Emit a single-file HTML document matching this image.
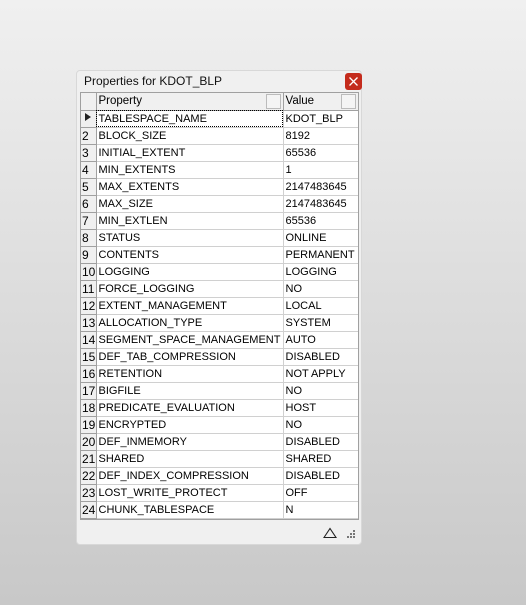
<!DOCTYPE html>
<html><head><style>
body{margin:0;width:526px;height:605px;background:linear-gradient(#f0f0f0,#c8c8c8);font-family:"Liberation Sans",sans-serif;font-size:11px;position:relative;overflow:hidden}
.win{position:absolute;left:76px;top:70px;width:286px;height:475px;background:#f0f0f0;border:1px solid #d8d8d8;border-radius:4px;box-sizing:border-box}
.title{position:absolute;left:7px;top:3px;font-size:12px;color:#111}
.close{position:absolute;left:268px;top:2px;width:17px;height:17px;background:#c42b1c;border-radius:3px}
.grid{position:absolute;left:3px;top:21px;width:279px;height:428px;background:#fff;border:1px solid #a0a0a0;box-sizing:border-box;overflow:hidden}
table{border-collapse:collapse;table-layout:fixed;width:277px}
td{height:17px;padding:0 0 0 2px;border-right:1px solid #d0d0d0;border-bottom:1px solid #d0d0d0;white-space:nowrap;overflow:hidden;line-height:16px;color:#000;box-sizing:border-box}
td.n{background:#f0f0f0;border-right:1px solid #a0a0a0;border-bottom:1px solid #a0a0a0;padding-left:1px;font-size:12px}
tr.h td{background:#f0f0f0;border-bottom:1px solid #a0a0a0;border-right:1px solid #a0a0a0;position:relative;font-size:11.5px}
.bx{position:absolute;right:2px;top:1px;width:13px;height:13px;border:1px solid #bbb;background:#f4f4f4}
</style></head><body>
<div class="win">
<div class="title">Properties for KDOT_BLP</div>
<div class="close"><svg width="17" height="17"><path d="M4.5 4.5L12.5 12.5M12.5 4.5L4.5 12.5" stroke="#fff" stroke-width="1.3"/></svg></div>
<div class="grid"><table>
<colgroup><col style="width:15px"><col style="width:187px"><col style="width:75px"></colgroup>
<tr class="h"><td class="n"></td><td>Property<span class="bx"></span></td><td>Value<span class="bx"></span></td></tr>
<tr><td class="n"><svg width="10" height="12"><path d="M3 2L9 6L3 10Z" fill="#222"/></svg></td><td style="outline:1px dotted #000;outline-offset:-1px">TABLESPACE_NAME</td><td>KDOT_BLP</td></tr>
<tr><td class="n">2</td><td>BLOCK_SIZE</td><td>8192</td></tr>
<tr><td class="n">3</td><td>INITIAL_EXTENT</td><td>65536</td></tr>
<tr><td class="n">4</td><td>MIN_EXTENTS</td><td>1</td></tr>
<tr><td class="n">5</td><td>MAX_EXTENTS</td><td>2147483645</td></tr>
<tr><td class="n">6</td><td>MAX_SIZE</td><td>2147483645</td></tr>
<tr><td class="n">7</td><td>MIN_EXTLEN</td><td>65536</td></tr>
<tr><td class="n">8</td><td>STATUS</td><td>ONLINE</td></tr>
<tr><td class="n">9</td><td>CONTENTS</td><td>PERMANENT</td></tr>
<tr><td class="n">10</td><td>LOGGING</td><td>LOGGING</td></tr>
<tr><td class="n">11</td><td>FORCE_LOGGING</td><td>NO</td></tr>
<tr><td class="n">12</td><td>EXTENT_MANAGEMENT</td><td>LOCAL</td></tr>
<tr><td class="n">13</td><td>ALLOCATION_TYPE</td><td>SYSTEM</td></tr>
<tr><td class="n">14</td><td>SEGMENT_SPACE_MANAGEMENT</td><td>AUTO</td></tr>
<tr><td class="n">15</td><td>DEF_TAB_COMPRESSION</td><td>DISABLED</td></tr>
<tr><td class="n">16</td><td>RETENTION</td><td>NOT APPLY</td></tr>
<tr><td class="n">17</td><td>BIGFILE</td><td>NO</td></tr>
<tr><td class="n">18</td><td>PREDICATE_EVALUATION</td><td>HOST</td></tr>
<tr><td class="n">19</td><td>ENCRYPTED</td><td>NO</td></tr>
<tr><td class="n">20</td><td>DEF_INMEMORY</td><td>DISABLED</td></tr>
<tr><td class="n">21</td><td>SHARED</td><td>SHARED</td></tr>
<tr><td class="n">22</td><td>DEF_INDEX_COMPRESSION</td><td>DISABLED</td></tr>
<tr><td class="n">23</td><td>LOST_WRITE_PROTECT</td><td>OFF</td></tr>
<tr><td class="n">24</td><td>CHUNK_TABLESPACE</td><td>N</td></tr>
</table></div>
<svg style="position:absolute;left:246px;top:456px" width="14" height="12"><path d="M1 10.5L7 1.5L13 10.5Z" fill="none" stroke="#222" stroke-width="1.1"/></svg>
<svg style="position:absolute;left:270px;top:459px" width="9" height="9"><g fill="#777"><rect x="6" y="0" width="2" height="2"/><rect x="3" y="3" width="2" height="2"/><rect x="6" y="3" width="2" height="2"/><rect x="0" y="6" width="2" height="2"/><rect x="3" y="6" width="2" height="2"/><rect x="6" y="6" width="2" height="2"/></g></svg>
</div>
</body></html>
